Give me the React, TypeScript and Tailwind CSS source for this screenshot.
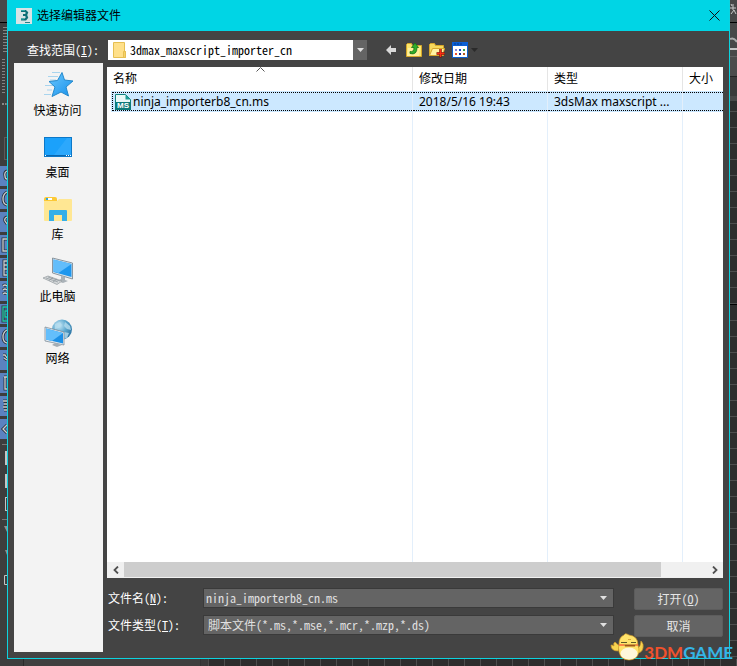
import { useState, type ReactNode } from 'react';

const uiFont = "font-['Noto_Sans','Noto_Sans_CJK_SC',sans-serif]";
const monoFont = "font-['Noto_Sans_Mono_CJK_SC','Noto_Sans_CJK_SC',monospace]";

function StarIcon() {
    return (
        <svg width="32" height="28" viewBox="0 0 32 28" aria-hidden="true">
            <defs>
                <linearGradient id="star" x1="0" y1="0" x2="1" y2="1">
                    <stop offset="0" stopColor="#6cc8ff" />
                    <stop offset="1" stopColor="#1590ea" />
                </linearGradient>
            </defs>
            <path d="M10 1.500h8M6 5.500h10M8 9h6M3 14.500h9M5 19h5M2 23.500h7" stroke="#a8d4ee" strokeWidth="1" />
            <path
                d="M20 1.500l2.500 7.500 8.500 1-7 6 2.500 9-7.500-4-9 4.500 3-9.500-6-5.500 8.500-1z"
                fill="url(#star)"
                stroke="#2489cc"
                strokeLinejoin="round"
            />
        </svg>
    );
}

function DesktopIcon() {
    return (
        <svg width="32" height="28" viewBox="0 0 32 28" aria-hidden="true">
            <rect x="2.5" y="4.5" width="27" height="19" fill="#1ba1fb" stroke="#0c78c8" />
            <path d="M12 22L25 5h4v17z" fill="#45b4ff" opacity=".4" />
            <path d="M3 22.500h26" stroke="#0a66ae" />
            <path d="M3 22.500h1M24 22.500h1M26 22.500h1M28 22.500h1" stroke="#fff" />
        </svg>
    );
}

function LibraryIcon() {
    return (
        <svg width="32" height="28" viewBox="0 0 32 28" aria-hidden="true">
            <path d="M2 4q0-2 2-2h9q2 0 2 2v2H2z" fill="#fcc936" />
            <path d="M4 3h6v2H4z" fill="#fff" />
            <path d="M4 3h2v2H4z" fill="#2fa6e0" />
            <path d="M2 6h13l2-2h12q1 0 1 1v20q0 1-1 1H3q-1 0-1-1z" fill="#ffe793" />
            <path d="M7 26V16q0-1 1-1h16q1 0 1 1v10h-5v-6h-8v6z" fill="#34afe8" />
        </svg>
    );
}

function ComputerIcon() {
    return (
        <svg width="32" height="28" viewBox="0 0 32 28" aria-hidden="true">
            <path d="M10.500 1l20 5v16l-20-6z" fill="#dfe5ea" stroke="#74818c" strokeWidth=".8" />
            <path d="M11.500 2.500l18 4.500v13l-18-5z" fill="#1e97ee" />
            <path d="M11.500 2.500l18 4.500-13 9-5-1.500z" fill="#62bdfb" />
            <path d="M19 19l4 1v3l3 1-5 2-6-2 4-2z" fill="#aab2b8" />
            <path d="M1 21l5-2 14 5-5 3.500z" fill="#d5d8da" stroke="#92999e" strokeWidth=".7" />
            <path d="M4 21l12 4M6 20l12 4M7 23.500l4-3M11 25l4-3" stroke="#8d959b" strokeWidth=".7" />
        </svg>
    );
}

function NetworkIcon() {
    return (
        <svg width="32" height="28" viewBox="0 0 32 28" aria-hidden="true">
            <defs>
                <radialGradient id="globe" cx=".35" cy=".3" r=".8">
                    <stop offset="0" stopColor="#c9e9f7" />
                    <stop offset=".5" stopColor="#5aa6cd" />
                    <stop offset="1" stopColor="#246b9c" />
                </radialGradient>
            </defs>
            <circle cx="20" cy="10.500" r="10" fill="url(#globe)" />
            <path d="M13 5l5-2 2 3-3 3-4 1zM23 3l5 4 1 4-4-1-3-3zM22 13l5 1-2 5-3 1z" fill="#b5dced" opacity=".8" />
            <path d="M3 8l19 5v13L3 22z" fill="#e3e9ee" stroke="#718390" strokeWidth=".7" />
            <path d="M4 9.500l17 4.500v10.500L4 20.500z" fill="#1c90e6" />
            <path d="M4 9.500l17 4.500-11 8-6-1.500z" fill="#63befb" />
            <path d="M13 24l3 1 4 1-5 2-5-2z" fill="#a4adb4" />
        </svg>
    );
}

function AppIcon() {
    return (
        <svg width="16" height="16" viewBox="0 0 16 16" aria-hidden="true">
            <rect width="16" height="16" fill="#d6e4e6" />
            <path d="M5 3h4.500L11 4.500 10 7l1 2.500L9.500 11.500H5M7 7h3" fill="none" stroke="#0d6f77" strokeWidth="2.200" />
            <path d="M5 2.500h4M5 11h3" stroke="#2ba9a9" strokeWidth="1.200" />
            <path d="M9 14.500h5" stroke="#287f88" />
        </svg>
    );
}

function FolderIcon() {
    return (
        <svg className="shrink-0" width="14" height="16" viewBox="0 0 14 16" aria-hidden="true">
            <path d="M.5.500h11v9h1v6H.5z" fill="#ffe08a" stroke="#e6bf52" />
            <path d="M10.500 9.500h2v6h-2z" fill="#f6d168" stroke="#e6bf52" />
        </svg>
    );
}

function ScriptIcon() {
    return (
        <span className="relative block h-4 w-4 shrink-0">
            <svg width="16" height="16" viewBox="0 0 16 16" aria-hidden="true">
                <path d="M.5.500h10l5 5v10H.5z" fill="#e9f8f7" stroke="#12827f" />
                <path d="M10.500.500v5h5z" fill="#1e9d98" />
                <path d="M0 8h16v8H0z" fill="#0d7a79" />
            </svg>
            <span className="absolute inset-x-0 bottom-0 text-center font-['Liberation_Sans',sans-serif] text-[8px] leading-[8px] font-bold text-white">
                MS
            </span>
        </span>
    );
}

function BackIcon() {
    return (
        <svg width="10" height="10" viewBox="0 0 10 10" aria-hidden="true">
            <path d="M0 5l5-5v3h5v4H5v3z" fill="#d9d9d9" />
        </svg>
    );
}

function UpFolderIcon() {
    return (
        <svg width="16" height="16" viewBox="0 0 16 16" aria-hidden="true">
            <path d="M.5 2.500l1-1h4l1 2h9v11H.5z" fill="#fbe66c" stroke="#d6a62a" />
            <path d="M2 6h12l-1 8H1z" fill="#fff09a" />
            <path d="M4 9.500q4 1 4-4H5.500L9 1l3.500 4.500H11q0 8-7 6z" fill="#2fae2a" stroke="#157315" strokeWidth=".8" />
        </svg>
    );
}

function NewFolderIcon() {
    return (
        <svg width="16" height="16" viewBox="0 0 16 16" aria-hidden="true">
            <path d="M.5 2.500l1-1h4l1 2h8v10H.5z" fill="#f6d85c" stroke="#d6a62a" />
            <path d="M3.500 6.500h12l-2 7h-13z" fill="#fff3a2" stroke="#d6a62a" />
            <path d="M11.500 7v8.500M7.500 11.500h8" stroke="#6b1207" strokeWidth="2.400" />
            <path d="M11.500 7v8M8 11.500h7.500" stroke="#fa2b12" strokeWidth="1.400" />
        </svg>
    );
}

function ViewIcon() {
    return (
        <svg width="16" height="16" viewBox="0 0 16 16" aria-hidden="true">
            <path d="M.5.500h15v15H.5z" fill="#fff" stroke="#0b5ed0" />
            <path d="M0 0h16v4H0z" fill="#0b5fd3" />
            <path d="M2 2h2M5 2h2M8 2h2" stroke="#063a8c" />
            <path d="M3 7h2v2H3z" fill="#8c86d8" />
            <path d="M7 7h2v2H7z" fill="#1846c8" />
            <path d="M11 7h2v2h-2z" fill="#35a04a" />
            <path d="M3 11h2v2H3z" fill="#f0512d" />
            <path d="M7 11h2v2H7z" fill="#122a9c" />
            <path d="M11 11h2v2h-2z" fill="#b9581c" />
        </svg>
    );
}

function DownArrow({ className }: { className: string }) {
    return (
        <svg className={className} width="7" height="4" viewBox="0 0 7 4" aria-hidden="true">
            <path d="M0 0h7L3.500 4z" fill="currentColor" />
        </svg>
    );
}

function Mascot() {
    return (
        <svg width="34" height="28" viewBox="0 0 34 28" aria-hidden="true">
            <path
                d="M8 18Q1 18 1 12q2 0 3 1-1-3 1-4 3 3 5 4zM27 16q4-3 4-8 3 3 2 7-1 5-6 5z"
                fill="#f7d34f"
                stroke="#c9932a"
                strokeWidth=".7"
            />
            <path
                d="M14 2q1-2 3-1l2 1q9 1 9 10 1 3 1 7-2 8-10 8-8 0-10-8-1-4 0-8 0-7 5-9z"
                fill="#ffe36b"
                stroke="#c9932a"
                strokeWidth=".7"
            />
            <ellipse cx="19" cy="20.500" rx="8.500" ry="6" fill="#fff6da" />
            <path d="M11 9.500h6M21 9.500h5" stroke="#5d5a28" />
            <path d="M18 6.500h3" stroke="#d9a63a" />
            <path d="M14 11.500h12l-1 2H15z" fill="#a2561a" />
            <path d="M9 12h5M26 12h2" stroke="#ff6a3c" strokeWidth="1.500" />
        </svg>
    );
}

const places = [
    { label: '快速访问', icon: <StarIcon /> },
    { label: '桌面', icon: <DesktopIcon /> },
    { label: '库', icon: <LibraryIcon /> },
    { label: '此电脑', icon: <ComputerIcon /> },
    { label: '网络', icon: <NetworkIcon /> },
];

const tileGlyphs = [
    'M7 5Q4 6 5 10q0 3 2 3',
    'M7 3Q3 5 3 10t4 6',
    'M7 5Q4 6 5 9l2 3',
    'M7 4H3v12h4',
    'M7 3H4v14h3M4 7h3M4 11h3',
    'M3 5q2-2 4 0M3 9q2-2 4 0M3 13q2-2 4 0',
    'M7 3H3v14h4M7 7H5v6h2',
    'M7 3Q3 5 3 10t4 6',
    'M3 5h2l2 3M4 8l3 2',
    'M4 4h3M5 4v12h2',
    'M3 5h4M4 8h3M3 11h4M4 14h3',
    'M7 6l-4 4 4 4',
];

// Slice of the main window's toolbar on the left of the dialog
function ToolStrip() {
    return (
        <div className="flex w-[7px] shrink-0 flex-col overflow-hidden bg-[#3d3d3d]" aria-hidden="true">
            <div className="h-[23px] border-b border-black bg-[#484848]" />
            <div className="mt-[3px] ml-[3px] h-[27px] bg-[radial-gradient(#8a8a8a_35%,transparent_40%)] bg-[size:2px_3px]" />
            <div className="mt-[5px] ml-[2px] h-[37px] w-[3px] bg-[radial-gradient(#8a8a8a_35%,transparent_40%)] bg-[size:2px_3px]" />
            <div className="mt-2 ml-[2px] border-t-2 border-dotted border-[#888]" />
            <div className="mt-8 ml-1 h-[23px] border border-r-0 border-[#5a5a5a]" />
            <div className="mt-[6px] flex flex-col gap-[3px]">
                {tileGlyphs.map((d, i) => (
                    <svg key={i} className="block h-5 w-[7px] bg-[#5b82c0]" viewBox="0 0 7 20">
                        <path d={d} fill="none" stroke="#2c3440" strokeWidth="3" />
                        <path d={d} fill="none" stroke={i === 6 ? '#27c7a8' : '#c8ccd0'} strokeWidth="1.300" />
                    </svg>
                ))}
            </div>
            <div className="mt-[5px] ml-[2px] border-t border-[#777]" />
            <div className="mt-[6px] ml-[5px] h-[14px] bg-[#c4c4c4]" />
            <div className="mt-[9px] ml-[5px] h-[14px] bg-[#c4c4c4]" />
            <div className="mt-[9px] ml-[5px] h-[14px] border border-r-0 border-[#c4c4c4]" />
            <div className="mt-2 ml-[2px] border-t border-[#777]" />
            <svg className="mt-[6px] block" width="7" height="62" viewBox="0 0 7 62">
                <path d="M4 0h3v6zM5 24h2v5z" fill="#909090" />
                <path d="M8 49.500H4.500v9H8" stroke="#c4c4c4" fill="none" />
            </svg>
        </div>
    );
}

// Slice of the render button and the viewport grid on the right
function ViewportStrip() {
    return (
        <div className="flex w-[7px] shrink-0 flex-col overflow-hidden bg-[#2d2d2d]" aria-hidden="true">
            <div className="h-[23px] border-b border-black bg-[#484848]">
                <svg width="7" height="22" viewBox="0 0 7 22">
                    <path d="M1 4l1 2M0 8h6M3 4v6M1 14l3-4 2 4" stroke="#c8c8c8" fill="none" />
                </svg>
            </div>
            <div className="h-[33px] bg-[#484848]">
                <svg width="7" height="33" viewBox="0 0 7 33">
                    <path d="M0 16q4-2 7 3" stroke="#aaa" strokeWidth="2" fill="none" />
                    <path d="M0 26h7" stroke="#c4c4c4" strokeWidth="2" />
                </svg>
            </div>
            <div className="h-[21px] border-y border-t-[#606060] border-b-[#222] bg-[#4b4b4b]" />
            <div className="h-[19px] bg-[#3a3a3a]" />
            <div className="h-[5px] bg-[#484848]" />
            <div className="h-[203px] bg-[repeating-linear-gradient(#2d2d2d_0px,#2d2d2d_10px,#4d4d4d_10px,#4d4d4d_11px,#2d2d2d_11px,#2d2d2d_16px)]" />
            <div className="h-px bg-black" />
            <div className="grow bg-[repeating-linear-gradient(#2d2d2d_0px,#2d2d2d_15px,#4d4d4d_15px,#4d4d4d_16px)]" />
        </div>
    );
}

interface FieldRowProps {
    id: string;
    label: string;
    hotkey: string;
    children: ReactNode;
}

function FieldRow({ id, label, hotkey, children }: FieldRowProps) {
    return (
        <div className="flex items-center">
            <label htmlFor={id} className={`w-[95px] shrink-0 text-[12px] leading-4 text-white ${monoFont}`}>
                {label}(<u>{hotkey}</u>):
            </label>
            <div className="flex h-5 min-w-0 grow items-center border border-[#3a3a3a] bg-[#646464]">{children}</div>
        </div>
    );
}

export default function App() {
    const [fileName, setFileName] = useState('ninja_importerb8_cn.ms');

    const headCell = 'border-r border-[#e5e5e5] p-0 pl-[6px] text-left font-normal last:border-r-0';
    const rowCell = 'border-r border-[#e3effb] bg-[#cce8ff] p-0 py-px last:border-r-0';
    const rowText = 'h-[19px] overflow-hidden border-y border-dotted border-black pl-[6px] leading-[18px] whitespace-nowrap';
    const button =
        'flex h-[22px] items-center justify-center rounded-xs border border-[#5c5c5c] bg-[#646464] text-[12px] leading-4 text-[#e6e6e6]';

    return (
        <div className="relative flex min-h-screen flex-col bg-[#2d2d2d]">
            <div className="flex grow">
                <ToolStrip />

                <div
                    role="dialog"
                    aria-labelledby="dialog-title"
                    className="flex min-w-0 grow flex-col border border-t-0 border-[#0cd3df] bg-[#444]"
                >
                    <header className={`flex h-[31px] items-center gap-[5px] bg-[#00d5e5] pr-[7px] pl-2 ${uiFont}`}>
                        <AppIcon />
                        <h1 id="dialog-title" className="grow text-[12px] leading-4 text-black">
                            选择编辑器文件
                        </h1>
                        <button type="button" aria-label="关闭" className="flex h-4 w-4 items-center justify-center">
                            <svg width="11" height="11" viewBox="0 0 11 11" aria-hidden="true">
                                <path d="M.5.500l10 10M10.500.500l-10 10" stroke="#111" />
                            </svg>
                        </button>
                    </header>

                    <div className="flex h-8 items-center pt-[6px] pl-[19px]">
                        <label htmlFor="look-in" className={`w-[81px] text-[12px] leading-4 text-white ${monoFont}`}>
                            查找范围(<u>I</u>):
                        </label>
                        <div className="flex h-5 w-[259px] items-center bg-white pl-[5px]">
                            <FolderIcon />
                            <select
                                id="look-in"
                                className={`h-5 min-w-0 grow appearance-none pl-[3px] text-[12px] text-black outline-none ${monoFont}`}
                            >
                                <option>3dmax_maxscript_importer_cn</option>
                            </select>
                            <span className="flex h-5 w-[14px] items-center justify-center bg-[#646464]">
                                <DownArrow className="text-[#e0e0e0]" />
                            </span>
                        </div>
                        <div className="ml-[19px] flex items-center gap-[7px]">
                            <button type="button" aria-label="后退" className="mr-[3px]">
                                <BackIcon />
                            </button>
                            <button type="button" aria-label="向上一级">
                                <UpFolderIcon />
                            </button>
                            <button type="button" aria-label="新建文件夹">
                                <NewFolderIcon />
                            </button>
                            <button type="button" aria-label="查看菜单" className="flex items-center gap-[3px]">
                                <ViewIcon />
                                <DownArrow className="text-[#2a2a2a]" />
                            </button>
                        </div>
                    </div>

                    <div className="flex grow pr-[6px] pb-[6px] pl-[6px]">
                        <nav className="flex w-[89px] shrink-0 flex-col gap-[14px] bg-[#f3f3f3] pt-2 pr-[2px]">
                            {places.map((place) => (
                                <button
                                    key={place.label}
                                    type="button"
                                    className={`flex h-12 flex-col items-center gap-1 text-[12px] leading-4 text-black ${uiFont}`}
                                >
                                    {place.icon}
                                    {place.label}
                                </button>
                            ))}
                        </nav>

                        <main className="mt-1 ml-1 flex min-w-0 grow flex-col">
                            <div className="flex grow flex-col bg-white">
                                <div className="relative flex grow flex-col">
                                    <svg
                                        className="absolute top-0 left-[149px]"
                                        width="9"
                                        height="5"
                                        viewBox="0 0 9 5"
                                        aria-hidden="true"
                                    >
                                        <path d="M.5 4.500l4-4 4 4" stroke="#555" fill="none" />
                                    </svg>
                                    <table
                                        className={`w-full grow table-fixed border-separate border-spacing-0 text-[12px] leading-4 text-black ${uiFont}`}
                                    >
                                        <colgroup>
                                            <col />
                                            <col className="w-[135px]" />
                                            <col className="w-[135px]" />
                                            <col className="w-10" />
                                        </colgroup>
                                        <thead>
                                            <tr className="h-6">
                                                <th className={headCell}>名称</th>
                                                <th className={headCell}>修改日期</th>
                                                <th className={headCell}>类型</th>
                                                <th className={headCell}>大小</th>
                                            </tr>
                                        </thead>
                                        <tbody>
                                            <tr className="h-[21px]">
                                                <td className="border-r border-[#e3effb] p-0 pl-1">
                                                    <div className="bg-[#cce8ff] py-px pl-px">
                                                        <div className="flex h-[19px] items-center gap-[2px] border border-r-0 border-dotted border-black pl-[2px] leading-[18px]">
                                                            <ScriptIcon />
                                                            ninja_importerb8_cn.ms
                                                        </div>
                                                    </div>
                                                </td>
                                                <td className={rowCell}>
                                                    <div className={rowText}>2018/5/16 19:43</div>
                                                </td>
                                                <td className={rowCell}>
                                                    <div className={rowText}>3dsMax maxscript ...</div>
                                                </td>
                                                <td className={rowCell}>
                                                    <div className={rowText} />
                                                </td>
                                            </tr>
                                            <tr>
                                                <td className="border-r border-[#e3effb]" />
                                                <td className="border-r border-[#e3effb]" />
                                                <td className="border-r border-[#e3effb]" />
                                                <td />
                                            </tr>
                                        </tbody>
                                    </table>
                                </div>

                                <div className="flex h-4 bg-[#f0f0f0]">
                                    <button type="button" aria-label="向左滚动" className="flex w-[17px] items-center justify-center">
                                        <svg width="6" height="8" viewBox="0 0 6 8" aria-hidden="true">
                                            <path d="M5 0.500L1.500 4 5 7.500" stroke="#505050" strokeWidth="1.800" fill="none" />
                                        </svg>
                                    </button>
                                    <div className="flex grow pb-px">
                                        <div className="flex-12 bg-[#cdcdcd]" />
                                        <div className="flex-1" />
                                    </div>
                                    <button type="button" aria-label="向右滚动" className="flex w-[17px] items-center justify-center">
                                        <svg width="6" height="8" viewBox="0 0 6 8" aria-hidden="true">
                                            <path d="M1 0.500L4.500 4 1 7.500" stroke="#505050" strokeWidth="1.800" fill="none" />
                                        </svg>
                                    </button>
                                </div>
                            </div>

                            <div className="flex gap-5 pt-[10px] pb-[15px] pl-px">
                                <div className="flex min-w-0 grow flex-col gap-[7px]">
                                    <FieldRow id="file-name" label="文件名" hotkey="N">
                                        <input
                                            id="file-name"
                                            type="text"
                                            value={fileName}
                                            onChange={(e) => setFileName(e.target.value)}
                                            className={`min-w-0 grow bg-transparent pl-[2px] text-[12px] leading-4 text-[#e0e0e0] outline-none ${monoFont}`}
                                        />
                                        <DownArrow className="mr-[6px] text-[#e0e0e0]" />
                                    </FieldRow>
                                    <FieldRow id="file-type" label="文件类型" hotkey="T">
                                        <select
                                            id="file-type"
                                            className={`h-[18px] min-w-0 grow appearance-none bg-transparent pl-1 text-[12px] text-[#e0e0e0] outline-none ${monoFont}`}
                                        >
                                            <option>脚本文件(*.ms,*.mse,*.mcr,*.mzp,*.ds)</option>
                                        </select>
                                        <DownArrow className="mr-[6px] text-[#e0e0e0]" />
                                    </FieldRow>
                                </div>
                                <div className="flex w-[89px] shrink-0 flex-col gap-[5px]">
                                    <button type="button" className={`${button} ${monoFont}`}>
                                        打开(<u>O</u>)
                                    </button>
                                    <button type="button" className={`${button} ${monoFont}`}>
                                        取消
                                    </button>
                                </div>
                            </div>
                        </main>
                    </div>
                </div>

                <ViewportStrip />
            </div>

            <div className="flex h-[7px]" aria-hidden="true">
                <div className="w-6 border-r border-[#2a2a2a] bg-[#3d3d3d]" />
                <div className="w-[177px] border-r border-[#333] bg-[#404040]" />
                <div className="w-[7px] bg-[#3a3a3a]" />
                <div className="grow bg-[repeating-linear-gradient(90deg,#4d4d4d_0px,#4d4d4d_1px,#2d2d2d_1px,#2d2d2d_16px)]" />
            </div>

            {/* Watermark in the bottom right corner */}
            <div className="absolute right-1 bottom-[5px] flex items-end">
                <Mascot />
                <span className="font-['Lato',sans-serif] text-[17px] leading-4 font-bold text-[#f0522c]">
                    3DM<span className="text-[#35b5e6]">GAME</span>
                </span>
            </div>
        </div>
    );
}
